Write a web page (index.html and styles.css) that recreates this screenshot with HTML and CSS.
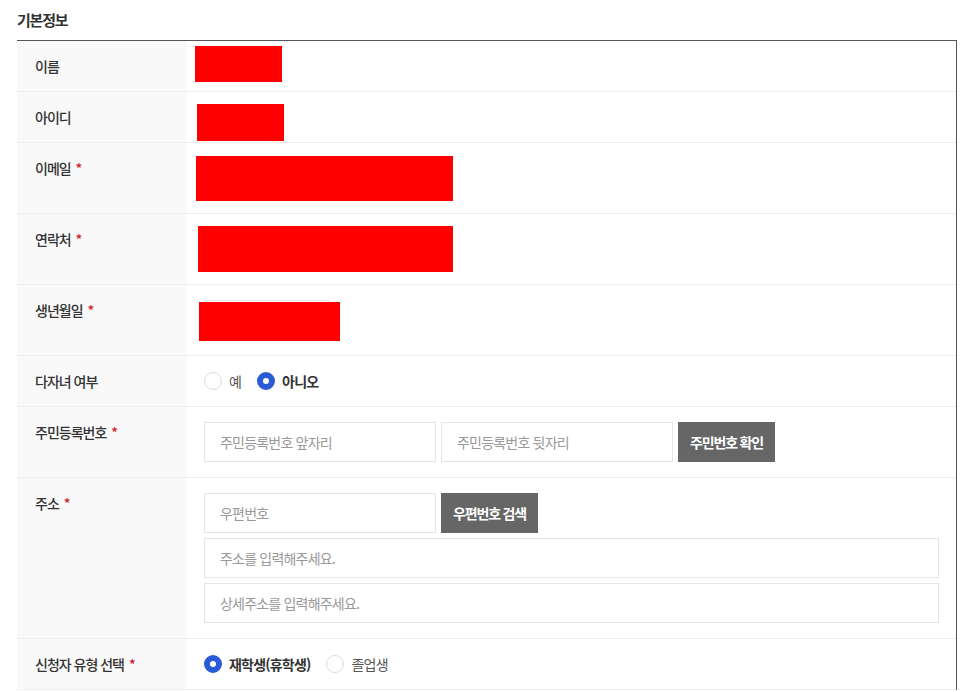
FILE: index.html
```html
<!DOCTYPE html>
<html lang="ko">
<head>
    <meta charset="UTF-8">
    <meta name="viewport" content="width=device-width, initial-scale=1.0">
    <title>기본정보</title>
    <link rel="stylesheet" href="styles.css">
</head>
<body>
    <div class="wrap">
        <h2 class="titulo">기본정보</h2>

        <div class="tabela">
            <div class="linha">
                <div class="rotulo">이름</div>
                <div class="valor">
                    <span class="tarja tarja-nome"></span>
                </div>
            </div>

            <div class="linha">
                <div class="rotulo">아이디</div>
                <div class="valor">
                    <span class="tarja tarja-id"></span>
                </div>
            </div>

            <div class="linha">
                <div class="rotulo">이메일 <em>*</em></div>
                <div class="valor campo">
                    <input type="text" class="entrada entrada-longa">
                    <span class="tarja tarja-email"></span>
                </div>
            </div>

            <div class="linha">
                <div class="rotulo">연락처 <em>*</em></div>
                <div class="valor campo">
                    <input type="text" class="entrada entrada-longa">
                    <span class="tarja tarja-fone"></span>
                </div>
            </div>

            <div class="linha">
                <div class="rotulo">생년월일 <em>*</em></div>
                <div class="valor campo">
                    <input type="text" class="entrada entrada-data">
                    <span class="tarja tarja-nasc"></span>
                </div>
            </div>

            <div class="linha">
                <div class="rotulo">다자녀 여부</div>
                <div class="valor opcoes">
                    <label class="opcao"><span class="radio"></span>예</label>
                    <label class="opcao marcada"><span class="radio"></span>아니오</label>
                </div>
            </div>

            <div class="linha">
                <div class="rotulo">주민등록번호 <em>*</em></div>
                <div class="valor campo">
                    <div class="grupo">
                        <input type="text" class="entrada" placeholder="주민등록번호 앞자리">
                        <input type="text" class="entrada" placeholder="주민등록번호 뒷자리">
                        <button class="botao">주민번호 확인</button>
                    </div>
                </div>
            </div>

            <div class="linha">
                <div class="rotulo">주소 <em>*</em></div>
                <div class="valor campo endereco">
                    <div class="grupo">
                        <input type="text" class="entrada" placeholder="우편번호">
                        <button class="botao">우편번호 검색</button>
                    </div>
                    <input type="text" class="entrada entrada-cheia" placeholder="주소를 입력해주세요.">
                    <input type="text" class="entrada entrada-cheia" placeholder="상세주소를 입력해주세요.">
                </div>
            </div>

            <div class="linha">
                <div class="rotulo">신청자 유형 선택 <em>*</em></div>
                <div class="valor opcoes">
                    <label class="opcao marcada"><span class="radio"></span>재학생(휴학생)</label>
                    <label class="opcao"><span class="radio"></span>졸업생</label>
                </div>
            </div>
        </div>
    </div>
</body>
</html>
```

FILE: styles.css
```css
body
{
    margin: 0;
    background-color: #fff;
    font-family: "Noto Sans CJK KR", "Noto Sans", sans-serif;
    color: #333;
}
.wrap
{
    padding-left: 17px;
    width: 940px;
}
.titulo
{
    margin: 0;
    height: 40px;
    line-height: 40px;
    font-size: 15px;
    font-weight: bold;
    letter-spacing: -1.2px;
    color: #333;
}
.tabela
{
    border-top: 1px solid #555;
    border-right: 1px solid #555;
}
.linha
{
    display: grid;
    grid-template-columns: 169px 1fr;
    border-bottom: 1px solid #eee;
}
.rotulo
{
    background-color: #f9f9f9;
    padding: 15px 0 15px 18px;
    line-height: 20px;
    font-size: 14px;
    font-weight: 500;
    letter-spacing: -1px;
    color: #333;
}
.rotulo em
{
    font-style: normal;
    color: #d0202a;
    margin-left: 2px;
}
.valor
{
    position: relative;
    padding: 0 17px 0 18px;
}
.campo
{
    padding-top: 15px;
    padding-bottom: 15px;
}
.endereco
{
    display: flex;
    flex-direction: column;
    gap: 5px;
}
.grupo
{
    display: flex;
    gap: 5px;
}
.entrada
{
    box-sizing: border-box;
    display: block;
    width: 232px;
    height: 40px;
    margin: 0;
    padding: 0 15px;
    border: 1px solid #e5e5e5;
    background-color: #fff;
    font-family: inherit;
    font-size: 14px;
    letter-spacing: -0.8px;
    color: #333;
    outline: none;
}
.entrada::placeholder
{
    color: #999;
}
.entrada-longa
{
    width: 246px;
}
.entrada-data
{
    width: 125px;
}
.entrada-cheia
{
    width: 735px;
}
.botao
{
    width: 97px;
    height: 40px;
    padding: 0;
    border: none;
    background-color: #666;
    color: #fff;
    font-family: inherit;
    font-size: 14px;
    font-weight: bold;
    letter-spacing: -1.2px;
}
.opcoes
{
    display: flex;
    align-items: center;
    gap: 16px;
}
.opcao
{
    display: flex;
    align-items: center;
    gap: 7px;
    font-size: 14px;
    letter-spacing: -0.8px;
    color: #555;
}
.radio
{
    box-sizing: border-box;
    width: 18px;
    height: 18px;
    border: 1px solid #ddd;
    border-radius: 50%;
    background-color: #fff;
}
.opcao.marcada
{
    color: #333;
    font-weight: bold;
}
.opcao.marcada .radio
{
    border: 6px solid #2a5bd7;
}

/* tarjas vermelhas por cima dos dados */
.tarja
{
    position: absolute;
    background-color: #f00;
}
.tarja-nome { left: 9px; top: 5px; width: 87px; height: 36px; }
.tarja-id { left: 11px; top: 12px; width: 87px; height: 37px; }
.tarja-email { left: 10px; top: 13px; width: 257px; height: 45px; }
.tarja-fone { left: 12px; top: 12px; width: 255px; height: 46px; }
.tarja-nasc { left: 13px; top: 17px; width: 141px; height: 39px; }
```
